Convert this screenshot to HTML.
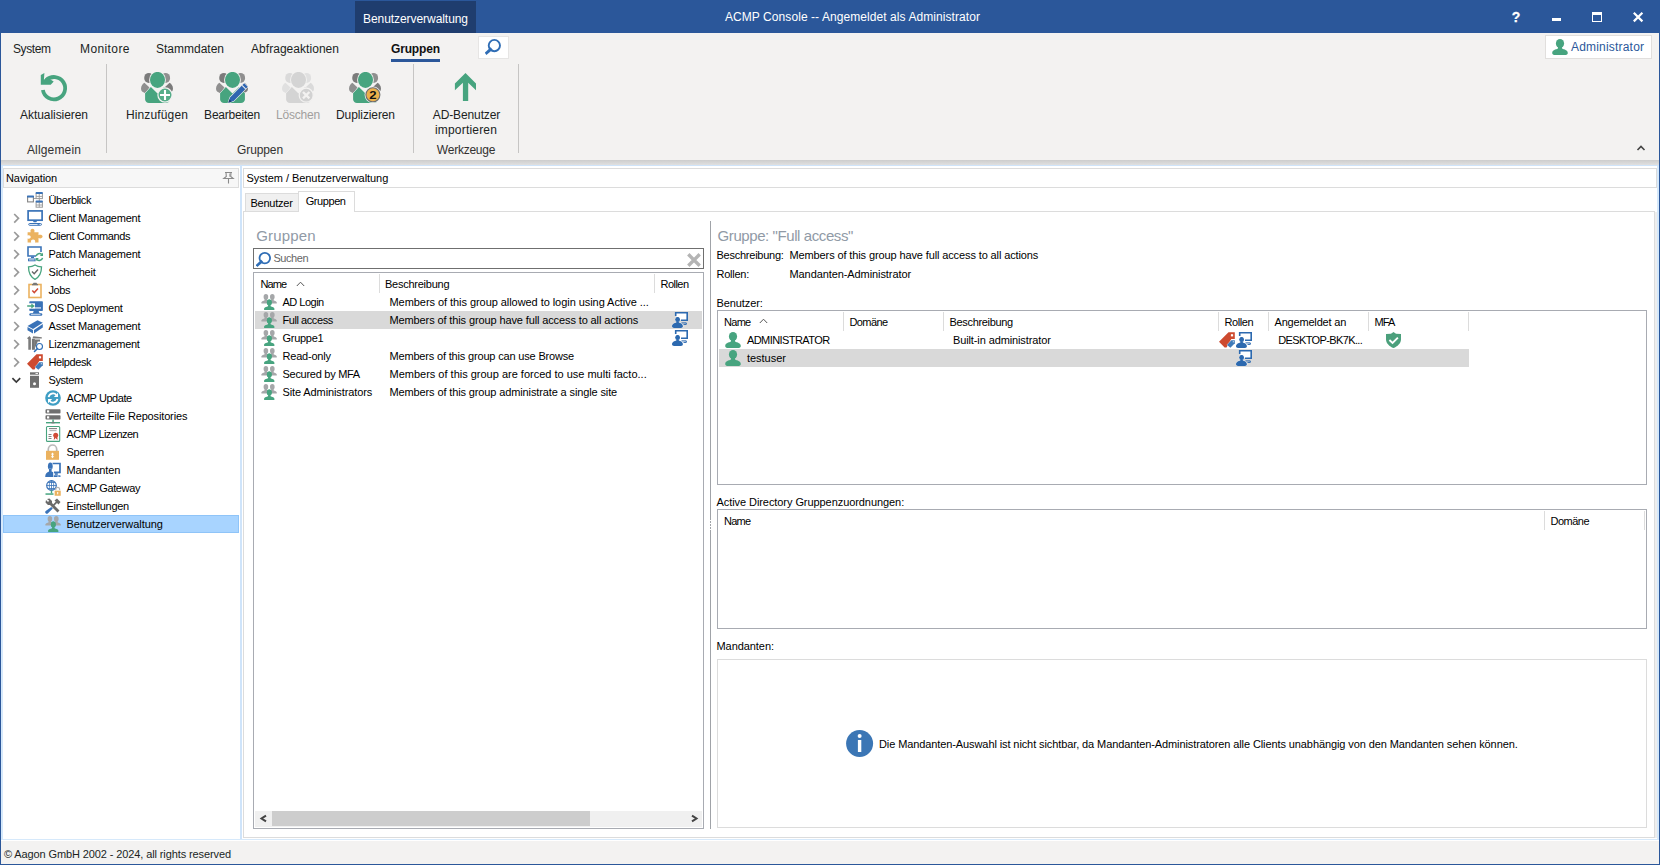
<!DOCTYPE html>
<html lang="de">
<head>
<meta charset="utf-8">
<title>ACMP Console</title>
<style>
*{box-sizing:border-box;margin:0;padding:0}
html,body{width:1660px;height:865px;overflow:hidden;background:#f3f2f1}
body{position:relative;font-family:"Liberation Sans",sans-serif;font-size:11px;color:#000;line-height:1}
#app,#app div,#app svg,#app span{position:absolute}
#app{left:0;top:0;width:1660px;height:865px;overflow:hidden}
.t{white-space:nowrap;line-height:14px;height:14px;font-size:11px;letter-spacing:-0.2px;color:#000}
.seg{font-size:12px;color:#201f1e;letter-spacing:0}
.c{transform:translateX(-50%);text-align:center}
svg{overflow:visible}
#titlebar{left:0;top:0;width:1660px;height:33px;background:#2b579a}
#ctx{left:355px;top:1px;width:121px;height:32px;background:#1f3d6e}
#winborder{left:0;top:0;width:1660px;height:865px;border:1px solid #2b579a;border-top:0}
#ribbon{left:1px;top:33px;width:1658px;height:127px;background:#f3f2f1}
.sep{width:1px;background:#c6c5c4;top:64px;height:89px}
#band{left:1px;top:160px;width:1658px;height:6px;background:linear-gradient(#cdcdcd,#e0e0e0 83%,#cfe4fa 84%)}
#main{left:1px;top:166px;width:1658px;height:675px;background:#fff}
#status{left:1px;top:841px;width:1658px;height:23px;background:#f3f2f1}
.hdr{background:#f7f7f7;border:1px solid #dcdcdc}
.box{background:#fff;border:1px solid #a8abb2}
.hs{width:1px;background:#dcdcdc;height:19px}
.sel{background:#d9d9d9}
</style>
</head>
<body>
<div id="app">

<svg width="0" height="0" style="left:-10px;top:-10px">
<defs>
<symbol id="g32" viewBox="0 0 32 32"><ellipse cx="7.800" cy="5.900" rx="4.600" ry="5" fill="#7b7b7b"/><ellipse cx="24.500" cy="5.900" rx="4.600" ry="5" fill="#8f8f8f"/><path d="M3.400 10.800L8.500 15.500L4.200 21.200C1.500 20.200 0 19 0 16.800C0 14 1.500 12 3.400 10.800Z" fill="#8f8f8f"/><path d="M28.600 10.800L23.500 15.500L27.800 21.200C30.500 20.200 32 19 32 16.800C32 14 30.500 12 28.600 10.800Z" fill="#7b7b7b"/><ellipse cx="16.500" cy="7.900" rx="8.400" ry="8.900" fill="#f3f2f1"/><path d="M9.900 14.900L16.500 21.500L23.100 14.900L28.900 21.200V27.500C28.900 29.500 27 30.900 25 30.900H8C6 30.900 4.100 29.500 4.100 27.500V21.200Z" fill="#47a47f" stroke="#f3f2f1" stroke-width="1" paint-order="stroke"/><ellipse cx="16.500" cy="7.900" rx="7.500" ry="8" fill="#47a47f"/></symbol>
<symbol id="g32d" viewBox="0 0 32 32"><ellipse cx="7.800" cy="5.900" rx="4.600" ry="5" fill="#dadada"/><ellipse cx="24.500" cy="5.900" rx="4.600" ry="5" fill="#e0e0e0"/><path d="M3.400 10.800L8.500 15.500L4.200 21.200C1.500 20.200 0 19 0 16.800C0 14 1.500 12 3.400 10.800Z" fill="#e0e0e0"/><path d="M28.600 10.800L23.500 15.500L27.800 21.200C30.500 20.200 32 19 32 16.800C32 14 30.500 12 28.600 10.800Z" fill="#dadada"/><ellipse cx="16.500" cy="7.900" rx="8.400" ry="8.900" fill="#f3f2f1"/><path d="M9.900 14.900L16.500 21.500L23.100 14.900L28.900 21.200V27.500C28.900 29.500 27 30.900 25 30.900H8C6 30.900 4.100 29.500 4.100 27.500V21.200Z" fill="#d4d4d4" stroke="#f3f2f1" stroke-width="1" paint-order="stroke"/><ellipse cx="16.500" cy="7.900" rx="7.500" ry="8" fill="#d4d4d4"/></symbol>
<symbol id="g16" viewBox="0 0 16 16">
<g fill="#a5a7a9"><ellipse cx="4.900" cy="2.900" rx="2.300" ry="2.800"/><path d="M3.700 4.800V6C3.700 6.600 0.300 6.900 0.300 9C0.300 9.600 0.800 9.600 1.500 9.600H8.500V6.500C7 6.300 6.100 6.300 6.100 6V4.800Z"/>
<ellipse cx="11.300" cy="2.900" rx="2.300" ry="2.800"/><path d="M10.100 4.800V6C10.100 6.300 9 6.300 7.500 6.500V9.600H14.700C15.400 9.600 15.900 9.600 15.900 9C15.900 6.900 12.500 6.600 12.500 6V4.800Z"/></g>
<g fill="#47a47f"><ellipse cx="8.300" cy="8.400" rx="2.400" ry="2.900"/><path d="M7.100 10.500V12C7.100 12.600 3 12.900 3 15.200C3 16 3.800 16 4.500 16H12C12.800 16 13.500 16 13.500 15.200C13.500 12.900 9.500 12.600 9.500 12V10.500Z"/></g>
<ellipse cx="8.300" cy="8.400" rx="2.400" ry="2.900" fill="#47a47f"/>
</symbol>
<symbol id="u16" viewBox="0 0 16 16">
<ellipse cx="8" cy="4.500" rx="4.100" ry="4.500" fill="#47a47f"/>
<path d="M6 7.500V9.200C6 10.200 0.200 10.200 0.200 14C0.200 15.600 1.500 16 3 16H13C14.500 16 15.800 15.600 15.800 14C15.800 10.200 10 10.200 10 9.200V7.500Z" fill="#47a47f"/>
</symbol>
<symbol id="role" viewBox="0 0 16 16">
<path d="M3.700 3.900V0.800H15.200V8.200H9" fill="#fff" stroke="#2c69af" stroke-width="1.600"/>
<path d="M9.500 10.900H14.300V12.400H11.500" fill="none" stroke="#2c69af" stroke-width="1"/>
<g fill="#2c69af" stroke="#fff" stroke-width="0.800" paint-order="stroke"><ellipse cx="5.600" cy="7.600" rx="2.200" ry="2.500"/>
<path d="M4.400 9.500V10.300C4.400 11 0 11.200 0 14.300C0 15.600 1 16 2 16H9C10 16 10.900 15.600 10.900 14.300C10.900 11.200 6.800 11 6.800 10.300V9.500Z"/></g>
<ellipse cx="5.600" cy="7.600" rx="2.200" ry="2.500" fill="#2c69af"/>
</symbol>
<symbol id="tag" viewBox="0 0 16 16">
<path d="M9.500 0.200H15.800V7H12.300L7.500 15.600H5.600L0 9.700Z" fill="#cd4a2f"/>
<rect x="11.900" y="2.200" width="2.200" height="2.200" fill="#fff"/>
<path d="M12.400 8.300H15.800V11.200L11.400 15.800L8 12.900Z" fill="#3e7ab8" stroke="#fff" stroke-width="0.700" paint-order="stroke"/>
<rect x="13.800" y="9.300" width="1" height="1" fill="#fff"/>
</symbol>
<symbol id="mag" viewBox="0 0 16 16">
<circle cx="8.800" cy="7.100" r="5.300" fill="none" stroke="#2f6db5" stroke-width="1.800"/>
<path d="M5.300 8.700L-0.200 13.900L1.300 15.900L7.200 11Z" fill="#2f6db5"/>
</symbol>
</defs>
</svg>

<div id="titlebar"></div><div id="ctx"></div>
<div class="t seg c" style="left:415.5px;top:12px;letter-spacing:-0.063px;color:#fff">Benutzerverwaltung</div>
<div class="t seg c" style="left:852.5px;top:10px;letter-spacing:0.072px;color:#fff">ACMP Console -- Angemeldet als Administrator</div>
<svg style="left:1507.5px;top:8px" width="16" height="18" viewBox="0 0 16 18"><text x="8" y="14" text-anchor="middle" font-family="Liberation Sans,sans-serif" font-weight="bold" font-size="14" fill="#fff" stroke="#fff" stroke-width="0.300">?</text></svg>
<div style="left:1552px;top:18px;width:9px;height:3px;background:#fff"></div>
<div style="left:1592px;top:12px;width:10px;height:10px;border:1px solid #fff;border-top-width:3px"></div>
<svg style="left:1633px;top:12px" width="10" height="10" viewBox="0 0 10 10"><path d="M0.800 0.800L9.400 9.400M9.400 0.800L0.800 9.400" stroke="#fff" stroke-width="2.200"/></svg>
<div id="ribbon"></div>
<div class="t seg" style="left:13px;top:42px;letter-spacing:-0.402px;">System</div>
<div class="t seg" style="left:80px;top:42px;letter-spacing:0.402px;">Monitore</div>
<div class="t seg" style="left:156px;top:42px;letter-spacing:-0.004px;">Stammdaten</div>
<div class="t seg" style="left:251px;top:42px;letter-spacing:0.043px;">Abfrageaktionen</div>
<div class="t seg" style="left:391px;top:42px;letter-spacing:-0.166px;font-weight:bold;color:#111">Gruppen</div>
<div style="left:391px;top:59px;width:49px;height:3px;background:#2b579a"></div>
<div style="left:478px;top:36px;width:31px;height:23px;background:#fff;border:1px solid #e6e5e4"></div>
<svg style="left:484.8px;top:37.8px" width="17" height="17"><use href="#mag" width="17" height="17"/></svg>
<div style="left:1545px;top:35px;width:107px;height:24px;background:#fff;border:1px solid #e1dfdd"></div>
<svg style="left:1552px;top:39px" width="16" height="16"><use href="#u16" width="16" height="16"/></svg>
<div class="t seg" style="left:1571px;top:40px;letter-spacing:0.192px;color:#2b579a">Administrator</div>
<svg style="left:1636px;top:144px" width="10" height="8" viewBox="0 0 10 8"><path d="M1.500 6L5 2.500L8.500 6" fill="none" stroke="#444" stroke-width="1.600"/></svg>
<div class="sep" style="left:106px"></div>
<div class="sep" style="left:413px"></div>
<div class="sep" style="left:518px"></div>
<div class="t seg c" style="left:54px;top:108px;letter-spacing:-0.059px;color:#201f1e">Aktualisieren</div>
<div class="t seg c" style="left:157px;top:108px;letter-spacing:0.143px;color:#201f1e">Hinzufügen</div>
<div class="t seg c" style="left:232px;top:108px;letter-spacing:-0.227px;color:#201f1e">Bearbeiten</div>
<div class="t seg c" style="left:298px;top:108px;letter-spacing:-0.228px;color:#a19f9d">Löschen</div>
<div class="t seg c" style="left:365.5px;top:108px;letter-spacing:-0.103px;color:#201f1e">Duplizieren</div>
<div class="t seg c" style="left:466.5px;top:108px;letter-spacing:-0.120px;color:#201f1e">AD-Benutzer</div>
<div class="t seg c" style="left:466px;top:123px;letter-spacing:0.197px;color:#201f1e">importieren</div>
<div class="t seg c" style="left:54px;top:143px;letter-spacing:0.163px;color:#323130">Allgemein</div>
<div class="t seg c" style="left:260px;top:143px;letter-spacing:-0.117px;color:#323130">Gruppen</div>
<div class="t seg c" style="left:466px;top:143px;letter-spacing:-0.247px;color:#323130">Werkzeuge</div>
<svg style="left:38px;top:72px" width="32" height="32" viewBox="0 0 32 32"><path d="M4.900 18A11.200 11.200 0 1 0 8.100 8.200" fill="none" stroke="#47a47f" stroke-width="3.800"/><path d="M2.800 3.100L6.400 1L5.900 7.400L10 6L15.700 9.500L12.700 12.800H2.800Z" fill="#47a47f"/></svg>
<svg style="left:141px;top:72px" width="32" height="32"><use href="#g32" width="32" height="32"/></svg>
<svg style="left:141px;top:72px" width="32" height="32" viewBox="0 0 32 32"><circle cx="24" cy="23" r="7.100" fill="#55ad89" stroke="#f3f2f1" stroke-width="1.200"/><path d="M19 23H29M24 18V28" stroke="#fff" stroke-width="2.100"/></svg>
<svg style="left:216px;top:72px" width="32" height="32"><use href="#g32" width="32" height="32"/></svg>
<svg style="left:216px;top:72px" width="32" height="32" viewBox="0 0 32 32"><g transform="rotate(45 21.500 21.500)"><path d="M19 9.500H24V29.500L21.500 34.500L19 29.500Z" fill="#2f65b0" stroke="#f3f2f1" stroke-width="1.100" paint-order="stroke"/><rect x="19" y="12" width="5" height="1" fill="#f3f2f1"/><path d="M19.900 31.300L21.500 34.500L23.100 31.300Z" fill="#1d3f73"/></g></svg>
<svg style="left:282px;top:72px" width="32" height="32"><use href="#g32d" width="32" height="32"/></svg>
<svg style="left:282px;top:72px" width="32" height="32" viewBox="0 0 32 32"><circle cx="24.200" cy="23.200" r="7" fill="#d2d2d2" stroke="#f3f2f1" stroke-width="1.200"/><path d="M21 20L27.400 26.400M27.400 20L21 26.400" stroke="#f3f2f1" stroke-width="2.300"/></svg>
<svg style="left:349px;top:72px" width="32" height="32"><use href="#g32" width="32" height="32"/></svg>
<svg style="left:349px;top:72px" width="32" height="32" viewBox="0 0 32 32"><circle cx="23.900" cy="22.800" r="8.300" fill="#f3f2f1"/><circle cx="23.900" cy="22.800" r="7" fill="#ecb04c" stroke="#6e6e6e" stroke-width="1.100"/><text x="0" y="0" transform="translate(23.900 26.600) scale(1.250 1)" text-anchor="middle" font-family="Liberation Sans,sans-serif" font-weight="bold" font-size="10.500" fill="#111">2</text></svg>
<svg style="left:450px;top:72px" width="32" height="32" viewBox="0 0 32 32"><path d="M15.500 0.900L26 11.400V18.200L18.200 10.700V28.900H12.900V10.700L4.900 18.200V11.400Z" fill="#47a47f"/></svg>
<div id="band"></div><div id="main"></div>
<div style="left:1px;top:166px;width:2px;height:674px;background:#d6e9fb"></div>
<div style="left:240px;top:165px;width:2px;height:675px;background:#cfe4fa"></div>
<div style="left:1px;top:839px;width:1658px;height:1px;background:#d6e9fb"></div>
<div style="left:1657px;top:166px;width:2px;height:674px;background:#d6e9fb"></div>
<div class="hdr" style="left:3px;top:168px;width:236px;height:20px"></div>
<div class="t " style="left:6px;top:171px;letter-spacing:-0.086px;">Navigation</div>
<svg style="left:222.5px;top:172px" width="11" height="12" viewBox="0 0 11 12"><path d="M2 0.500H9M3 0.500L3.300 4.500L0.800 6.500H10.200L7.700 4.500L8 0.500M5.500 6.500V11.500" fill="none" stroke="#8a8a8a" stroke-width="1.100"/><path d="M6.300 1.500H7.400V4.800H6.300Z" fill="#9a9a9a"/></svg>
<svg style="left:27px;top:192px" width="16" height="16" viewBox="0 0 16 16"><path d="M6.500 6.500H9M12.300 6.500V9" stroke="#9a9a9a" stroke-width="0.900"/><rect x="0.600" y="4.600" width="5.800" height="5.300" fill="#fff" stroke="#858585" stroke-width="1.100"/><rect x="0" y="3.500" width="7" height="1.900" rx="0.600" fill="#3a73b8"/><rect x="9.100" y="1.500" width="6.300" height="5.100" fill="#fff" stroke="#9a9a9a" stroke-width="1"/><path d="M12.250 1.500V6.600M9.100 4.400H15.400" stroke="#9a9a9a" stroke-width="0.900"/><rect x="8.600" y="0" width="7.300" height="2" rx="0.800" fill="#3a73b8"/><rect x="9.100" y="10.100" width="6.300" height="5.100" fill="#fff" stroke="#9a9a9a" stroke-width="1"/><path d="M12.250 10.100V15.200M9.100 13H15.400" stroke="#9a9a9a" stroke-width="0.900"/><rect x="8.600" y="8.600" width="7.300" height="2" rx="0.800" fill="#3a73b8"/></svg>
<div class="t " style="left:48.5px;top:193px;letter-spacing:-0.356px;">Überblick</div>
<svg style="left:27px;top:210px" width="16" height="16" viewBox="0 0 16 16"><rect x="1.100" y="0.900" width="14" height="9.300" fill="#fff" stroke="#3a73b8" stroke-width="1.700"/><path d="M6 11H10L9.300 12.300H6.700Z" fill="#3a73b8"/><rect x="1.700" y="13.500" width="12.800" height="1.800" rx="0.900" fill="#fff" stroke="#3a73b8" stroke-width="1"/><rect x="10.500" y="14" width="2" height="0.800" fill="#3a73b8"/></svg>
<div class="t " style="left:48.5px;top:211px;letter-spacing:-0.206px;">Client Management</div>
<svg style="left:13px;top:213px" width="7" height="11" viewBox="0 0 7 11"><path d="M1.200 1L5.500 5.300L1.200 9.600" fill="none" stroke="#9a9a9a" stroke-width="1.700"/></svg>
<svg style="left:27px;top:228px" width="16" height="16" viewBox="0 0 16 16"><path d="M0.600 4.200H3.700C2.900 2.400 4 0.800 5.500 0.800C7 0.800 8.100 2.400 7.300 4.200H11.500V7.200C13.300 6.300 15.600 7 15.600 8.600C15.600 10.200 13.300 10.900 11.500 10V14.600H8C8.800 12.800 7.600 11.600 6.100 11.600C4.600 11.600 3.400 12.800 4.200 14.600H0.600V10.400C2.300 11.200 3.700 10.400 3.700 9C3.700 7.600 2.300 6.800 0.600 7.600Z" fill="#ebb25f"/></svg>
<div class="t " style="left:48.5px;top:229px;letter-spacing:-0.394px;">Client Commands</div>
<svg style="left:13px;top:231px" width="7" height="11" viewBox="0 0 7 11"><path d="M1.200 1L5.500 5.300L1.200 9.600" fill="none" stroke="#9a9a9a" stroke-width="1.700"/></svg>
<svg style="left:27px;top:246px" width="16" height="16" viewBox="0 0 16 16"><path d="M9 10H1V1H14V6" fill="none" stroke="#3a73b8" stroke-width="1.600"/><rect x="4" y="10.500" width="3" height="1.500" fill="#3a73b8"/><rect x="1.500" y="13" width="6.500" height="1.800" fill="#fff" stroke="#3a73b8" stroke-width="1"/><path d="M9.200 10.200A3.300 3.300 0 0 1 14.800 8.600M15.500 11.800A3.300 3.300 0 0 1 9.900 13.400" fill="none" stroke="#47a47f" stroke-width="1.500"/><path d="M16 6.800V10H12.800Z" fill="#47a47f"/><path d="M8.700 15.200V12H11.900Z" fill="#47a47f"/></svg>
<div class="t " style="left:48.5px;top:247px;letter-spacing:-0.220px;">Patch Management</div>
<svg style="left:13px;top:249px" width="7" height="11" viewBox="0 0 7 11"><path d="M1.200 1L5.500 5.300L1.200 9.600" fill="none" stroke="#9a9a9a" stroke-width="1.700"/></svg>
<svg style="left:27px;top:264px" width="16" height="16" viewBox="0 0 16 16"><path d="M8 1C6 2.300 3.800 2.800 1.500 2.800C1.500 8.500 3 12.800 8 15.300C13 12.800 14.500 8.500 14.500 2.800C12.200 2.800 10 2.300 8 1Z" fill="#fff" stroke="#47a47f" stroke-width="1.300"/><path d="M5 7.500L7.200 9.700L11 5.500" fill="none" stroke="#666" stroke-width="1.400"/></svg>
<div class="t " style="left:48.5px;top:265px;letter-spacing:-0.168px;">Sicherheit</div>
<svg style="left:13px;top:267px" width="7" height="11" viewBox="0 0 7 11"><path d="M1.200 1L5.500 5.300L1.200 9.600" fill="none" stroke="#9a9a9a" stroke-width="1.700"/></svg>
<svg style="left:27px;top:282px" width="16" height="16" viewBox="0 0 16 16"><rect x="2" y="2.500" width="12" height="13" fill="#fff" stroke="#ebb25f" stroke-width="1.600"/><path d="M5.500 2.500L6.500 0.800H9.500L10.500 2.500Z" fill="#777"/><rect x="5" y="2" width="6" height="1.300" fill="#777"/><path d="M5.300 8.500L7.300 10.600L11 6.500" fill="none" stroke="#d04b36" stroke-width="1.500"/></svg>
<div class="t " style="left:48.5px;top:283px;letter-spacing:-0.445px;">Jobs</div>
<svg style="left:13px;top:285px" width="7" height="11" viewBox="0 0 7 11"><path d="M1.200 1L5.500 5.300L1.200 9.600" fill="none" stroke="#9a9a9a" stroke-width="1.700"/></svg>
<svg style="left:27px;top:300px" width="16" height="16" viewBox="0 0 16 16"><rect x="2.300" y="1.300" width="13.600" height="9.800" rx="0.800" fill="#3a73b8"/><rect x="1.300" y="3.300" width="6.700" height="5.400" fill="#fff"/><rect x="8" y="7.400" width="6" height="1.100" fill="#fff"/><path d="M0.200 5.200H4.300V3.400L7.900 6L4.300 8.600V6.800H0.200Z" fill="#47a47f"/><path d="M6.700 11.100H11.700L12.500 13.300H5.900Z" fill="#3a73b8"/><rect x="2.300" y="13.200" width="13" height="2.500" rx="1.200" fill="#3a73b8"/><rect x="4" y="14.200" width="9.500" height="0.600" fill="#fff"/></svg>
<div class="t " style="left:48.5px;top:301px;letter-spacing:-0.279px;">OS Deployment</div>
<svg style="left:13px;top:303px" width="7" height="11" viewBox="0 0 7 11"><path d="M1.200 1L5.500 5.300L1.200 9.600" fill="none" stroke="#9a9a9a" stroke-width="1.700"/></svg>
<svg style="left:27px;top:318px" width="16" height="16" viewBox="0 0 16 16"><path d="M0.500 8L10.500 2.200L15.800 4.800L6 11Z" fill="#3a73b8"/><path d="M0.500 9L6 12V15.500L0.500 12.300Z" fill="#3a73b8"/><path d="M7 12L15.800 6V9.500L7 15.500Z" fill="#3a73b8"/></svg>
<div class="t " style="left:48.5px;top:319px;letter-spacing:-0.178px;">Asset Management</div>
<svg style="left:13px;top:321px" width="7" height="11" viewBox="0 0 7 11"><path d="M1.200 1L5.500 5.300L1.200 9.600" fill="none" stroke="#9a9a9a" stroke-width="1.700"/></svg>
<svg style="left:27px;top:336px" width="16" height="16" viewBox="0 0 16 16"><path d="M0 2.300L2.500 0L3.900 1.800V13.800H1.300V3.200Z" fill="#7c7c7c"/><rect x="4.900" y="2.900" width="3" height="10.900" fill="#767676"/><path d="M5.400 2.600L6.300 0.200L14.800 1.200V2.600Z" fill="#7c7c7c"/><path d="M7.900 3.600H13V5.600H10.700L7.900 12.300Z" fill="#767676"/><circle cx="12.500" cy="10.500" r="3" fill="#fff" stroke="#2f6db5" stroke-width="1.100"/><path d="M10.200 12.800L7.500 15.500" stroke="#2f6db5" stroke-width="1.600" stroke-linecap="round"/></svg>
<div class="t " style="left:48.5px;top:337px;letter-spacing:-0.314px;">Lizenzmanagement</div>
<svg style="left:13px;top:339px" width="7" height="11" viewBox="0 0 7 11"><path d="M1.200 1L5.500 5.300L1.200 9.600" fill="none" stroke="#9a9a9a" stroke-width="1.700"/></svg>
<svg style="left:27px;top:354px" width="16" height="16"><use href="#tag" width="16" height="16"/></svg>
<div class="t " style="left:48.5px;top:355px;letter-spacing:-0.409px;">Helpdesk</div>
<svg style="left:13px;top:357px" width="7" height="11" viewBox="0 0 7 11"><path d="M1.200 1L5.500 5.300L1.200 9.600" fill="none" stroke="#9a9a9a" stroke-width="1.700"/></svg>
<svg style="left:27px;top:372px" width="16" height="16" viewBox="0 0 16 16"><rect x="3" y="0.300" width="9" height="2.400" fill="#6f6f6f"/><rect x="8.500" y="1" width="2.500" height="0.900" fill="#fff"/><rect x="3" y="3.800" width="9" height="12" fill="#6f6f6f"/><circle cx="7.500" cy="11.800" r="1.500" fill="#fff"/></svg>
<div class="t " style="left:48.5px;top:373px;letter-spacing:-0.415px;">System</div>
<svg style="left:11px;top:377px" width="11" height="7" viewBox="0 0 11 7"><path d="M1.400 1.200L5.300 5.100L9.200 1.200" fill="none" stroke="#3a3a3a" stroke-width="1.700"/></svg>
<svg style="left:45px;top:390px" width="16" height="16" viewBox="0 0 16 16"><circle cx="8" cy="8" r="7.800" fill="#3f9ec4"/><path d="M3.600 7.200A4.500 4.500 0 0 1 11.400 5M12.400 8.800A4.500 4.500 0 0 1 4.600 11" fill="none" stroke="#fff" stroke-width="1.800"/><path d="M13 2.800V7H8.800Z" fill="#fff"/><path d="M3 13.200V9H7.200Z" fill="#fff"/></svg>
<div class="t " style="left:66.5px;top:391px;letter-spacing:-0.441px;">ACMP Update</div>
<svg style="left:45px;top:408px" width="16" height="16" viewBox="0 0 16 16"><rect x="0.500" y="1.300" width="15" height="4.200" rx="0.700" fill="#6f6f6f"/><rect x="0.500" y="7.200" width="15" height="4.300" rx="0.700" fill="#6f6f6f"/><rect x="2" y="2.300" width="2.200" height="2.200" fill="#fff"/><rect x="2" y="8.300" width="2.200" height="2.200" fill="#fff"/><rect x="7.300" y="11.500" width="1.500" height="2.700" fill="#47a47f"/><rect x="1" y="14" width="14" height="1.400" fill="#47a47f"/><rect x="6.500" y="14" width="3" height="1.400" fill="#7a7a7a"/></svg>
<div class="t " style="left:66.5px;top:409px;letter-spacing:-0.147px;">Verteilte File Repositories</div>
<svg style="left:45px;top:426px" width="16" height="16" viewBox="0 0 16 16"><rect x="1.500" y="0.500" width="13.200" height="14.900" rx="1" fill="#fff" stroke="#47a47f" stroke-width="1.100"/><rect x="4" y="2.300" width="8" height="0.800" fill="#555"/><rect x="4.500" y="4.400" width="7" height="0.700" fill="#888"/><rect x="3.500" y="8" width="3" height="0.800" fill="#666"/><rect x="3.500" y="10.100" width="3" height="0.800" fill="#666"/><rect x="3.500" y="12.200" width="3" height="0.800" fill="#666"/><circle cx="10.700" cy="9.300" r="2.500" fill="#d04b36"/><path d="M9.200 10.800L8.700 13.800L10.100 13L10.700 11.500L11.300 13L12.700 13.800L12.200 10.800Z" fill="#d04b36"/></svg>
<div class="t " style="left:66.5px;top:427px;letter-spacing:-0.548px;">ACMP Lizenzen</div>
<svg style="left:45px;top:444px" width="16" height="16" viewBox="0 0 16 16"><path d="M3.300 7.500V5.200A4.200 4.200 0 0 1 11.700 5.200V7.500" fill="none" stroke="#b9b9b9" stroke-width="1.700"/><rect x="1" y="6.800" width="13" height="9" fill="#ebb25f"/><path d="M7.500 8.500L9.200 10.500H8.100V12.300H9.200L7.500 14.300L5.800 12.300H6.900V10.500H5.800Z" fill="#fff"/></svg>
<div class="t " style="left:66.5px;top:445px;letter-spacing:-0.239px;">Sperren</div>
<svg style="left:45px;top:462px" width="16" height="16" viewBox="0 0 16 16"><path d="M7.500 1.500H15V10.300H9" fill="#fff" stroke="#3a73b8" stroke-width="1.700"/><rect x="9.800" y="11.200" width="3" height="1.600" fill="#3a73b8"/><rect x="8.600" y="13.200" width="6.900" height="1.800" rx="0.500" fill="#3a73b8"/><rect x="12" y="13.800" width="2.300" height="0.600" fill="#fff"/><g fill="#3a73b8" stroke="#fff" stroke-width="0.500" paint-order="stroke"><ellipse cx="5.300" cy="4.200" rx="2.400" ry="3.800"/><path d="M4 7V9.600C2 10.200 0.200 11.800 0.200 14.900H8.200V10.300C7.500 9.900 6.800 9.700 6.600 9.600V7Z"/></g></svg>
<div class="t " style="left:66.5px;top:463px;letter-spacing:-0.156px;">Mandanten</div>
<svg style="left:45px;top:480px" width="16" height="16" viewBox="0 0 16 16"><circle cx="6.500" cy="5.500" r="4.800" fill="#fff" stroke="#3a73b8" stroke-width="1.200"/><path d="M6.500 0.700V10.300M1.700 5.500H11.300M3 2.500H10M3 8.500H10" stroke="#3a73b8" stroke-width="0.800" fill="none"/><ellipse cx="6.500" cy="5.500" rx="2.200" ry="4.800" fill="none" stroke="#3a73b8" stroke-width="0.800"/><rect x="5.800" y="10.300" width="1.400" height="3" fill="#47a47f"/><rect x="0.500" y="13.300" width="8" height="1.500" fill="#47a47f"/><path d="M10.800 10.500V9.300A1.900 1.900 0 0 1 14.600 9.300V10.500" fill="none" stroke="#b5b5b5" stroke-width="1.200"/><rect x="9.300" y="10.300" width="6.700" height="5.700" fill="#ebb25f" stroke="#fff" stroke-width="0.500"/><rect x="12.200" y="12" width="1" height="2.300" fill="#fff"/></svg>
<div class="t " style="left:66.5px;top:481px;letter-spacing:-0.377px;">ACMP Gateway</div>
<svg style="left:45px;top:498px" width="16" height="16" viewBox="0 0 16 16"><path d="M2 1L4.500 0.500L7 3L7 5L14.500 12.500L12.500 14.500L5 7L3 7L0.500 4.500L1 2L3 4L4.200 2.800Z" fill="#6a6a6a"/><path d="M9.500 2.500L12 0.500L15.500 4L13.500 6.500L12 5L9 8L7.800 6.800L10.800 3.800Z" fill="#6a6a6a"/><path d="M6.300 9L7.800 10.500L3 15.300C2.300 16 1.300 16 0.700 15.300C0 14.700 0 13.700 0.700 13Z" fill="#3a73b8"/></svg>
<div class="t " style="left:66.5px;top:499px;letter-spacing:-0.279px;">Einstellungen</div>
<div style="left:3px;top:515px;width:236px;height:18px;background:#a8d4ff;border:1px solid #8fc4f8"></div>
<svg style="left:45px;top:516px" width="16" height="16"><use href="#g16" width="16" height="16"/></svg>
<div class="t " style="left:66.5px;top:517px;letter-spacing:-0.043px;">Benutzerverwaltung</div>
<div style="left:243px;top:168px;width:1414px;height:20px;background:#fff;border:1px solid #dcdcdc"></div>
<div class="t " style="left:246.5px;top:171px;letter-spacing:-0.049px;">System / Benutzerverwaltung</div>
<div style="left:243px;top:211px;width:1412px;height:627px;background:#fff;border:1px solid #dcdcdc"></div>
<div style="left:1655px;top:212px;width:2px;height:626px;background:#eeeeee"></div>
<div style="left:245px;top:193px;width:54px;height:19px;background:#f0f0f0;border:1px solid #dcdcdc"></div>
<div style="left:298px;top:191px;width:57px;height:21px;background:#fff;border:1px solid #dcdcdc;border-bottom:0"></div>
<div class="t " style="left:250.5px;top:196px;letter-spacing:-0.247px;">Benutzer</div>
<div class="t " style="left:305.7px;top:194px;letter-spacing:-0.418px;">Gruppen</div>
<div class="t seg" style="left:256.3px;top:226.5px;letter-spacing:0.137px;font-size:15px;color:#909aa6;line-height:18px;height:18px">Gruppen</div>
<div style="left:253px;top:248px;width:451px;height:21px;background:#fff;border:1px solid #6f6f6f"></div>
<svg style="left:256px;top:251px" width="16" height="16"><use href="#mag" width="16" height="16"/></svg>
<div class="t " style="left:273.5px;top:251px;letter-spacing:-0.462px;color:#666">Suchen</div>
<svg style="left:687px;top:253px" width="14" height="14" viewBox="0 0 14 14"><path d="M1.300 1.300L12.700 12.700M12.700 1.300L1.300 12.700" stroke="#b4b4b4" stroke-width="3.400"/></svg>
<div class="box" style="left:253px;top:272px;width:451px;height:557px"></div>
<div class="t " style="left:260.5px;top:277px;letter-spacing:-0.881px;">Name</div>
<svg style="left:295.5px;top:280.5px" width="9" height="6" viewBox="0 0 9 6"><path d="M0.800 5L4.500 1.200L8.200 5" fill="none" stroke="#555" stroke-width="1"/></svg>
<div class="hs" style="left:379px;top:274px"></div><div class="hs" style="left:654px;top:274px"></div>
<div class="t " style="left:385px;top:277px;letter-spacing:-0.252px;">Beschreibung</div>
<div class="t " style="left:660.5px;top:277px;letter-spacing:-0.537px;">Rollen</div>
<svg style="left:261px;top:294px" width="16" height="16"><use href="#g16" width="16" height="16"/></svg>
<div class="t " style="left:282.5px;top:295px;letter-spacing:-0.508px;">AD Login</div>
<div class="t " style="left:389.5px;top:295px;letter-spacing:-0.056px;">Members of this group allowed to login using Active ...</div>
<div class="sel" style="left:255px;top:311px;width:447px;height:18px"></div>
<svg style="left:261px;top:312px" width="16" height="16"><use href="#g16" width="16" height="16"/></svg>
<div class="t " style="left:282.5px;top:313px;letter-spacing:-0.432px;">Full access</div>
<div class="t " style="left:389.5px;top:313px;letter-spacing:-0.118px;">Members of this group have full access to all actions</div>
<svg style="left:672px;top:312px" width="16" height="16"><use href="#role" width="16" height="16"/></svg>
<svg style="left:261px;top:330px" width="16" height="16"><use href="#g16" width="16" height="16"/></svg>
<div class="t " style="left:282.5px;top:331px;letter-spacing:-0.285px;">Gruppe1</div>
<svg style="left:672px;top:330px" width="16" height="16"><use href="#role" width="16" height="16"/></svg>
<svg style="left:261px;top:348px" width="16" height="16"><use href="#g16" width="16" height="16"/></svg>
<div class="t " style="left:282.5px;top:349px;letter-spacing:-0.205px;">Read-only</div>
<div class="t " style="left:389.5px;top:349px;letter-spacing:-0.173px;">Members of this group can use Browse</div>
<svg style="left:261px;top:366px" width="16" height="16"><use href="#g16" width="16" height="16"/></svg>
<div class="t " style="left:282.5px;top:367px;letter-spacing:-0.278px;">Secured by MFA</div>
<div class="t " style="left:389.5px;top:367px;letter-spacing:-0.004px;">Members of this group are forced to use multi facto...</div>
<svg style="left:261px;top:384px" width="16" height="16"><use href="#g16" width="16" height="16"/></svg>
<div class="t " style="left:282.5px;top:385px;letter-spacing:-0.106px;">Site Administrators</div>
<div class="t " style="left:389.5px;top:385px;letter-spacing:-0.125px;">Members of this group administrate a single site</div>
<div style="left:255px;top:811px;width:447px;height:16px;background:#f0f0f0"></div>
<div style="left:272px;top:811px;width:318px;height:15px;background:#cdcdcd"></div>
<svg style="left:260px;top:814px" width="7" height="9" viewBox="0 0 7 9"><path d="M6 1.600L1.500 4.500L6 7.400" fill="none" stroke="#444" stroke-width="2"/></svg>
<svg style="left:690.5px;top:814px" width="7" height="9" viewBox="0 0 7 9"><path d="M1 1.600L5.500 4.500L1 7.400" fill="none" stroke="#444" stroke-width="2"/></svg>
<div style="left:710px;top:221px;width:1px;height:608px;background:#a0a3a8"></div>
<div style="left:710px;top:520px;width:1px;height:10px;background:repeating-linear-gradient(#fff 0 1px,#a0a3a8 1px 3px)"></div>
<div class="t seg" style="left:717.6px;top:226.5px;letter-spacing:-0.417px;font-size:15px;color:#909aa6;line-height:18px;height:18px">Gruppe: "Full access"</div>
<div class="t " style="left:716.5px;top:248px;letter-spacing:-0.244px;">Beschreibung:</div>
<div class="t " style="left:789.5px;top:248px;letter-spacing:-0.118px;">Members of this group have full access to all actions</div>
<div class="t " style="left:716.5px;top:267px;letter-spacing:-0.257px;">Rollen:</div>
<div class="t " style="left:789.5px;top:267px;letter-spacing:-0.087px;">Mandanten-Administrator</div>
<div class="t " style="left:716.5px;top:296px;letter-spacing:-0.098px;">Benutzer:</div>
<div class="box" style="left:717px;top:310px;width:930px;height:175px"></div>
<div class="t " style="left:724px;top:315px;letter-spacing:-0.714px;">Name</div>
<svg style="left:759px;top:318px" width="9" height="6" viewBox="0 0 9 6"><path d="M0.800 5L4.500 1.200L8.200 5" fill="none" stroke="#555" stroke-width="1"/></svg>
<div class="hs" style="left:843px;top:312px"></div>
<div class="t " style="left:849.5px;top:315px;letter-spacing:-0.616px;">Domäne</div>
<div class="hs" style="left:943px;top:312px"></div>
<div class="t " style="left:949.5px;top:315px;letter-spacing:-0.325px;">Beschreibung</div>
<div class="hs" style="left:1218px;top:312px"></div>
<div class="t " style="left:1224.5px;top:315px;letter-spacing:-0.437px;">Rollen</div>
<div class="hs" style="left:1268px;top:312px"></div>
<div class="t " style="left:1274.5px;top:315px;letter-spacing:-0.183px;">Angemeldet an</div>
<div class="hs" style="left:1368px;top:312px"></div>
<div class="t " style="left:1374.5px;top:315px;letter-spacing:-0.857px;">MFA</div>
<div class="hs" style="left:1468px;top:312px"></div>
<div class="sel" style="left:719px;top:349px;width:750px;height:18px"></div>
<svg style="left:725px;top:332px" width="16" height="16"><use href="#u16" width="16" height="16"/></svg>
<div class="t " style="left:747px;top:333px;letter-spacing:-0.579px;">ADMINISTRATOR</div>
<div class="t " style="left:953px;top:333px;letter-spacing:-0.117px;">Built-in administrator</div>
<svg style="left:1219px;top:332px" width="16" height="16"><use href="#tag" width="16" height="16"/></svg>
<svg style="left:1236px;top:332px" width="16" height="16"><use href="#role" width="16" height="16"/></svg>
<div class="t " style="left:1278.3px;top:333px;letter-spacing:-0.631px;">DESKTOP-BK7K...</div>
<svg style="left:1386px;top:332px" width="15" height="16" viewBox="0 0 15 16"><path d="M7.500 0L10 1.800L15 2V7.500C15 11.200 11.500 14.600 7.500 16C3.500 14.600 0 11.200 0 7.500V2L5 1.800Z" fill="#4ba07c"/><path d="M3.400 8L6.550 10.900L11.900 5.600" fill="none" stroke="#fff" stroke-width="1.900"/></svg>
<svg style="left:725px;top:350px" width="16" height="16"><use href="#u16" width="16" height="16"/></svg>
<div class="t " style="left:747px;top:351px;letter-spacing:-0.033px;">testuser</div>
<svg style="left:1236px;top:350px" width="16" height="16"><use href="#role" width="16" height="16"/></svg>
<div class="t " style="left:716.5px;top:495px;letter-spacing:-0.070px;">Active Directory Gruppenzuordnungen:</div>
<div class="box" style="left:717px;top:509px;width:930px;height:120px"></div>
<div class="t " style="left:724px;top:514px;letter-spacing:-0.781px;">Name</div>
<div class="t " style="left:1550.5px;top:514px;letter-spacing:-0.516px;">Domäne</div>
<div class="hs" style="left:1544px;top:511px"></div><div class="hs" style="left:1644px;top:511px"></div>
<div class="t " style="left:716.5px;top:639px;letter-spacing:-0.067px;">Mandanten:</div>
<div style="left:717px;top:659px;width:930px;height:169px;background:#fff;border:1px solid #dcdcdc"></div>
<svg style="left:846px;top:730px" width="28" height="28" viewBox="0 0 28 28"><circle cx="13.600" cy="13.500" r="13.500" fill="#3b76b5"/><circle cx="13.650" cy="6" r="2" fill="#fff"/><rect x="11.900" y="10" width="3.400" height="12" fill="#fff"/></svg>
<div class="t " style="left:879px;top:737px;letter-spacing:-0.100px;">Die Mandanten-Auswahl ist nicht sichtbar, da Mandanten-Administratoren alle Clients unabhängig von den Mandanten sehen können.</div>
<div id="status"></div>
<div class="t " style="left:4px;top:847px;letter-spacing:-0.111px;color:#201f1e">© Aagon GmbH 2002 - 2024, all rights reserved</div>
<div id="winborder"></div>
</div>
</body>
</html>
